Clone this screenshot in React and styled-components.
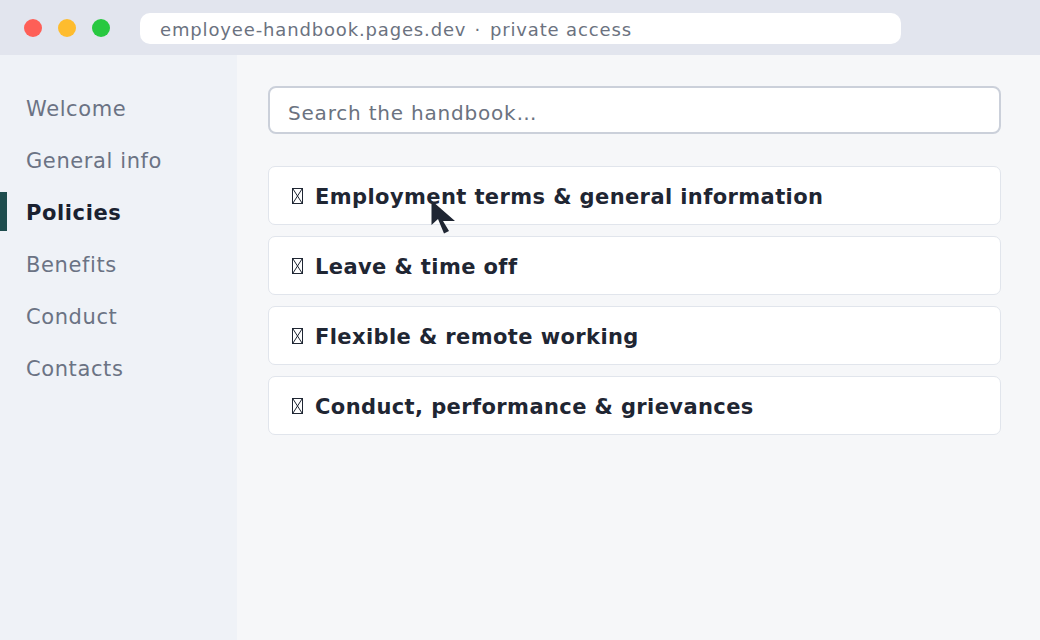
import React from "react";
import styled, { createGlobalStyle } from "styled-components";

const Global = createGlobalStyle`
  html, body {
    margin: 0;
    padding: 0;
    background: #f6f7f9;
  }
  body {
    font-family: "DejaVu Sans", "Open Sans", sans-serif;
  }
`;

const Window = styled.div`
  position: relative;
  width: 1040px;
  height: 640px;
  display: flex;
  flex-direction: column;
  overflow: hidden;
  background: #f6f7f9;
`;

const TitleBar = styled.div`
  height: 55px;
  flex: none;
  display: flex;
  align-items: center;
  padding: 0 0 0 24px;
  background: #e2e5ee;
  box-sizing: border-box;
`;

const Dots = styled.div`
  display: flex;
  gap: 16px;
  margin-right: 30px;
`;

const Dot = styled.span`
  width: 18px;
  height: 18px;
  border-radius: 50%;
  background: ${(p) => p.color};
`;

const Address = styled.div`
  width: 761px;
  height: 31px;
  margin-top: 1px;
  border-radius: 10px;
  background: #ffffff;
  display: flex;
  align-items: center;
  padding-left: 20px;
  padding-top: 2px;
  box-sizing: border-box;
  font-size: 18px;
  color: #6b7280;
  letter-spacing: 0.85px;
  white-space: pre;
`;

const Sep = styled.span`
  margin: 0 9px 0 8px;
`;

const Body = styled.div`
  flex: 1;
  display: flex;
`;

const Sidebar = styled.nav`
  width: 237px;
  flex: none;
  background: #eff2f7;
  padding-top: 27px;
  box-sizing: border-box;
  display: flex;
  flex-direction: column;
`;

const NavItem = styled.div`
  position: relative;
  height: 52px;
  display: flex;
  align-items: center;
  padding-left: 26px;
  padding-top: 1px;
  box-sizing: border-box;
  font-size: 21px;
  letter-spacing: 0.6px;
  font-weight: ${(p) => (p.active ? 700 : 400)};
  color: ${(p) => (p.active ? "#1a2130" : "#6b7384")};

  &::before {
    content: "";
    display: ${(p) => (p.active ? "block" : "none")};
    position: absolute;
    left: 0;
    top: 6px;
    width: 7px;
    height: 39px;
    background: #1e4d4e;
  }
`;

const Main = styled.main`
  flex: 1;
  padding: 31px 39px 0 31px;
  display: flex;
  flex-direction: column;
`;

const Search = styled.div`
  height: 48px;
  border: 2px solid #cbd0da;
  border-radius: 8px;
  background: #ffffff;
  box-sizing: border-box;
  display: flex;
  align-items: center;
  padding-left: 18px;
  padding-top: 6px;
  font-size: 20px;
  letter-spacing: 0.8px;
  color: #6b7280;
  margin-bottom: 32px;
`;

const List = styled.div`
  display: flex;
  flex-direction: column;
  gap: 11px;
`;

const Card = styled.div`
  height: 59px;
  border: 1px solid #e1e5ec;
  border-radius: 7px;
  background: #ffffff;
  box-sizing: border-box;
  display: flex;
  align-items: center;
  padding-left: 23px;
  padding-top: 3px;
  gap: 12px;
  font-size: 21px;
  letter-spacing: 0.4px;
  font-weight: 700;
  color: #1f2633;
`;

const Tofu = () => (
  <svg width="11" height="16" viewBox="0 0 11 16" style={{ flex: "none", marginTop: "-3px" }}>
    <rect x="0.5" y="0.5" width="10" height="15" fill="none" stroke="#1f2633" />
    <path d="M1 1 L10 15 M10 1 L1 15" stroke="#1f2633" strokeWidth="1" />
  </svg>
);

const Pointer = styled.svg`
  position: absolute;
  left: 431px;
  top: 200px;
`;

const nav = ["Welcome", "General info", "Policies", "Benefits", "Conduct", "Contacts"];
const sections = [
  "Employment terms & general information",
  "Leave & time off",
  "Flexible & remote working",
  "Conduct, performance & grievances",
];

export default function App() {
  return (
    <Window>
      <Global />
      <TitleBar>
        <Dots>
          <Dot color="#fe5f57" />
          <Dot color="#febc2e" />
          <Dot color="#28c840" />
        </Dots>
        <Address>
          employee-handbook.pages.dev<Sep>·</Sep>private access
        </Address>
      </TitleBar>
      <Body>
        <Sidebar>
          {nav.map((n) => (
            <NavItem key={n} active={n === "Policies"}>
              {n}
            </NavItem>
          ))}
        </Sidebar>
        <Main>
          <Search>Search the handbook…</Search>
          <List>
            {sections.map((s) => (
              <Card key={s}>
                <Tofu />
                <span>{s}</span>
              </Card>
            ))}
          </List>
        </Main>
      </Body>
      <Pointer width="26" height="35" viewBox="0 0 26 35">
        <path
          d="M0.5 0.5 L0.5 25 L7 19 L13 33.5 L18 31 L12 21 L24 21 Z"
          fill="#1f2633"
        />
      </Pointer>
    </Window>
  );
}
